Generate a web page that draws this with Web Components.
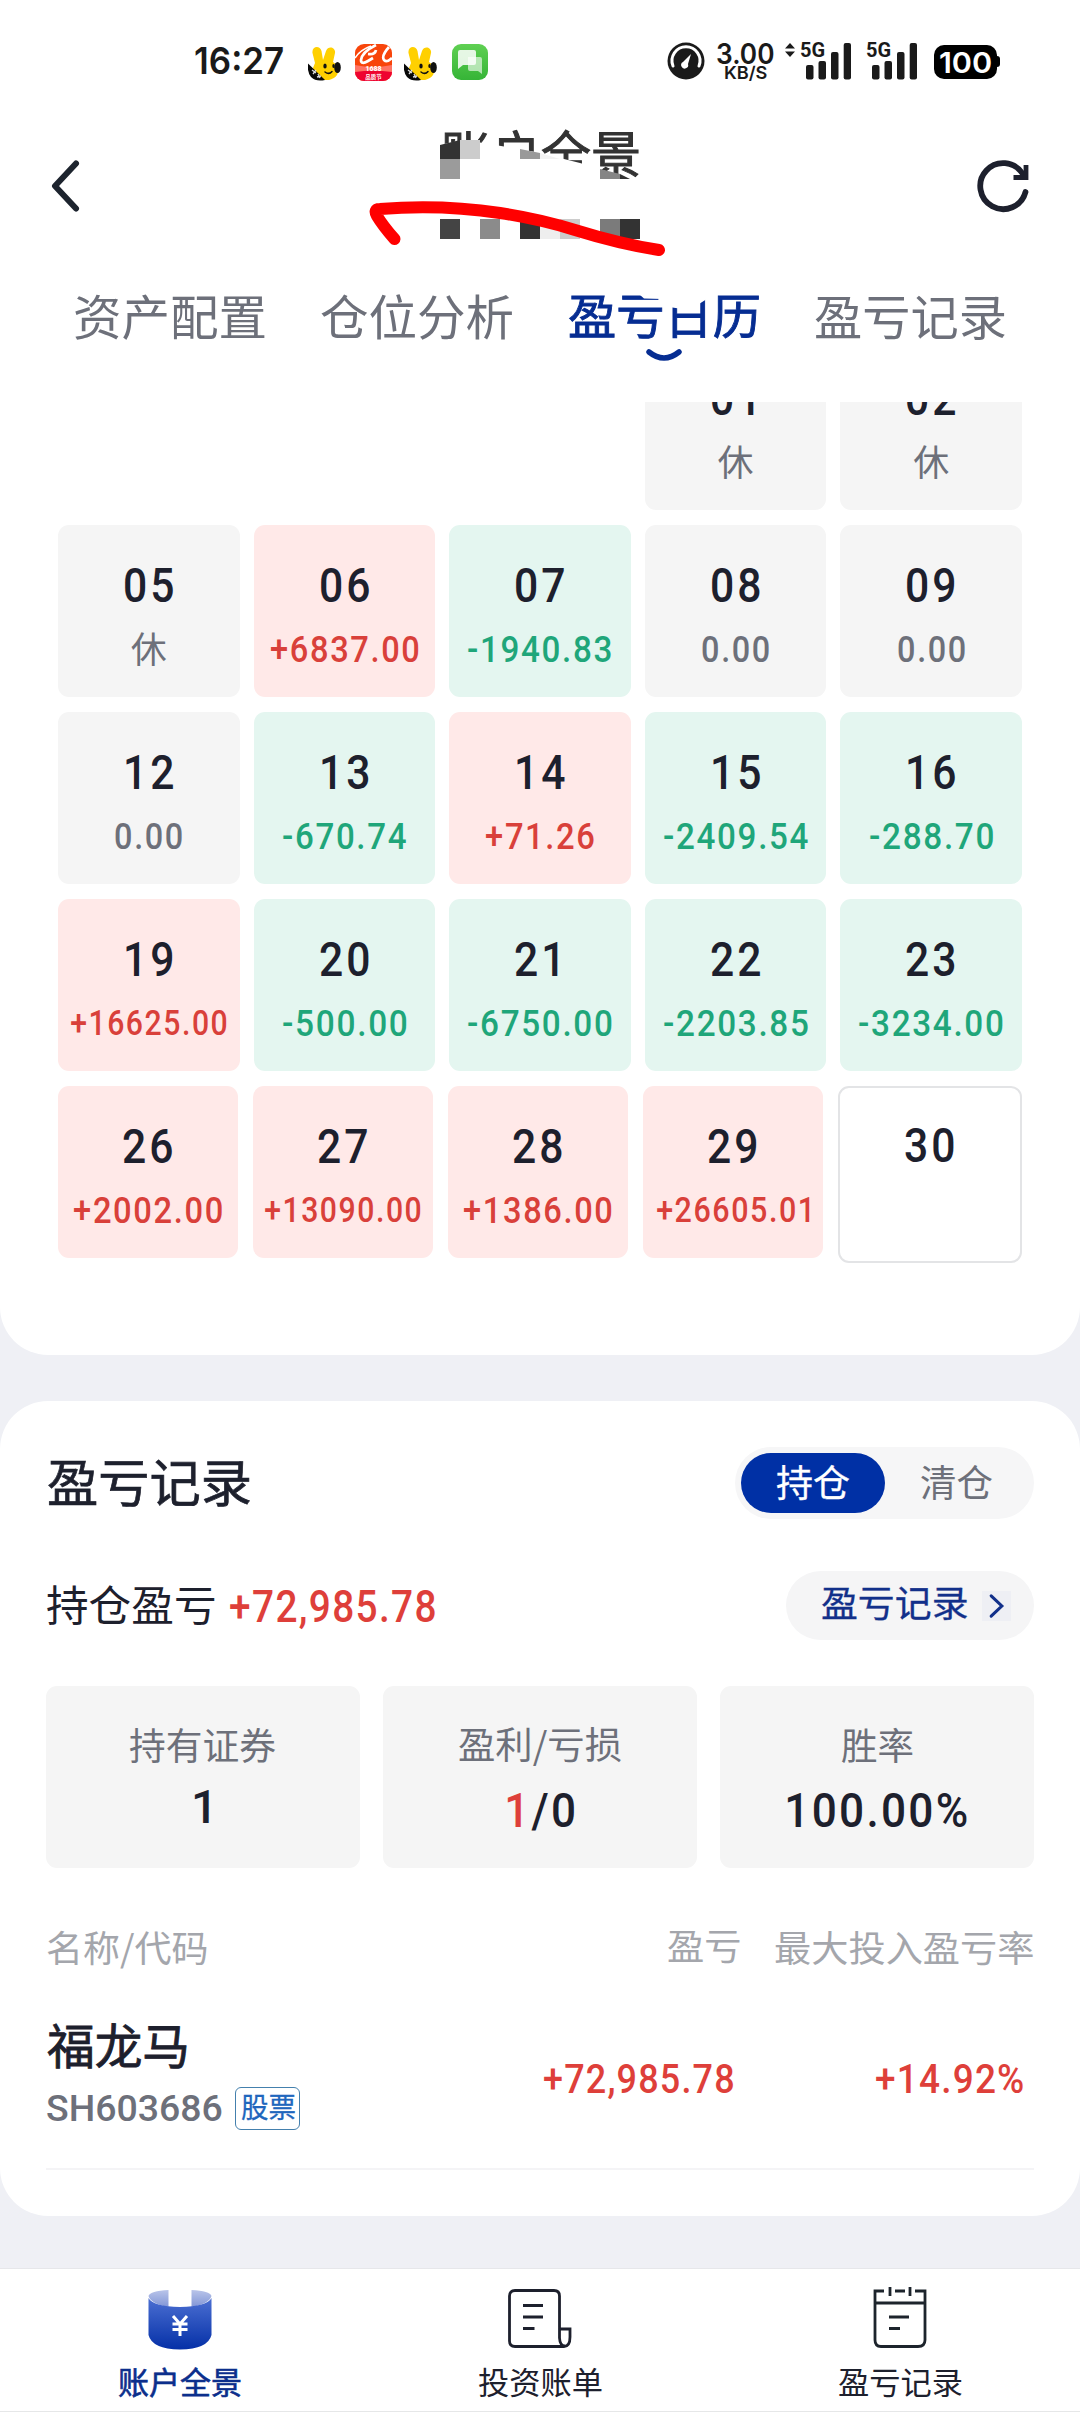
<!DOCTYPE html>
<html lang="zh-CN">
<head>
<meta charset="utf-8">
<title>账户全景</title>
<style>
html,body{margin:0;padding:0;background:#eff0f5}
body{width:1080px;height:2412px;overflow:hidden;font-family:Roboto,"Noto Sans CJK SC",sans-serif;color:#1d202d}
</style>
</head>
<body>
<account-app></account-app>
<script>
const define=(name,html,cls)=>{
  const t=document.createElement('template');t.innerHTML=html;
  customElements.define(name,cls||class extends HTMLElement{
    constructor(){super();this.attachShadow({mode:'open'}).append(t.content.cloneNode(true));}
  });
};
const ctx=document.createElement('canvas').getContext('2d');

/* One line of text fitted to an ink width (w) or a horizontal factor (k), centred on its ink. */
customElements.define('fit-text',class extends HTMLElement{
  connectedCallback(){
    const a=n=>this.getAttribute(n), s=+a('s'), wt=a('wt')||400, ls=+(a('ls')||0), txt=this.textContent;
    const cjk=/[\u4e00-\u9fff]/.test(txt);
    const fam=a('f')?`"${a('f')}",sans-serif`:cjk?'"Noto Sans CJK SC",sans-serif':'Roboto,"Noto Sans CJK SC",sans-serif';
    ctx.font=`${wt} ${s}px ${fam}`;
    const m=ctx.measureText(txt), v=cjk?m:ctx.measureText('0'), extra=ls*(txt.length-1);
    const l=m.actualBoundingBoxLeft, r=m.actualBoundingBoxRight+extra;
    let k,w,dx;
    if(a('w')){w=+a('w');k=w/(l+r);dx=l*k;}else{k=+(a('k')||1);w=(m.width+extra)*k;dx=0;}
    const dy=(v.actualBoundingBoxAscent-v.actualBoundingBoxDescent)/2-(m.fontBoundingBoxAscent-m.fontBoundingBoxDescent)/2;
    this.attachShadow({mode:'open'}).innerHTML=`<style>
      :host{display:block;flex:none;width:${w}px;height:${s}px;white-space:nowrap}
      span{display:inline-block;font:${wt} ${s}px/${s}px ${fam};letter-spacing:${ls}px;transform-origin:0 50%;
      transform:translate(${dx}px,${dy}px) scaleX(${k});-webkit-text-stroke:${a('sk')||0}px currentColor}
      </style><span><slot></slot></span>`;
  }
});

define('signal-bars',`<style>:host{display:flex;align-items:flex-start}svg{display:block}
fit-text{margin:-3px -17px 0 0}</style>
<fit-text s="20" wt="700" w="22"><slot></slot></fit-text>
<svg width="46" height="37" viewBox="0 0 46 37" fill="#1a1a1a"><rect x="1" y="22" width="7.5" height="14.5" rx="2"/><rect x="13.5" y="18" width="7.5" height="18.500" rx="2"/><rect x="26" y="9" width="7.500" height="27.5" rx="2"/><rect x="38.700" y="0" width="7.300" height="36.500" rx="2"/></svg>`);

define('bunny-icon',`<style>:host{display:block}svg{display:block}</style>
<svg width="34" height="36" viewBox="0 0 34 36">
<path d="M7 17 4.500 7C3.500 0 12-1 13.500 5l1.500 9 3-9c2-6 10-4 9 2l-2 9c5 3 7 8 4 13-2 3-5 4-8 5l-6 0C10 32 6 26 5 22z" fill="#ffd000"/>
<ellipse cx="29.500" cy="21.500" rx="3.300" ry="5.500" fill="#111"/><ellipse cx="17" cy="20" rx="1.700" ry="2.500" fill="#111"/><ellipse cx="25.500" cy="20" rx="1.200" ry="2" fill="#111"/>
<path d="M17 26q4 3 7-.5" stroke="#111" stroke-width="1.500" fill="none" stroke-linecap="round"/>
<path d="M0 17.500 17 34Q8 36 3 31-1 26 0 17.500z" fill="#080808"/><path d="m4 24 4 3m-3 1 3-4m1 7 4-1m-3-2 2 4" stroke="#ddd" stroke-width="1.300"/></svg>`);

define('status-bar',`<style>:host{display:flex;height:100px;align-items:flex-start;color:#1a1a1a;box-sizing:border-box;padding-left:195px}
svg{display:block;flex:none}.bat{margin-left:17px;width:63px;height:34px;border-radius:10px;background:#000;color:#fff;display:flex;align-items:center;justify-content:center;margin-top:45px}
.deal{width:37px;height:37px;border-radius:9px;margin:44px 12px 0 13px;overflow:hidden}
.speed{margin:39px 0 0 12px;display:flex;flex-direction:column;align-items:center;width:57px}
.nub{width:3px;height:11px;margin-top:56px;background:#000;border-radius:0 3px 3px 0}</style>
<fit-text s="37" wt="600" w="88" f="Inter" style="margin-top:42px">16:27</fit-text>
<bunny-icon style="margin:46px 0 0 25px"></bunny-icon>
<div class="deal"><svg width="37" height="37" viewBox="0 0 37 37"><rect width="37" height="37" fill="#f8450b"/>
<path d="M0 14Q5 6 16 2" stroke="#fff" stroke-width="1.500" fill="none"/><path d="M21 1Q7 8 6 16q0 5 7 1l5-3M13 10q7 1 8-4M34 3Q26 12 29 16q3 3 8-2" stroke="#fff" stroke-width="2.700" fill="none"/>
<path d="M0 21q18 4 37 0v16H0z" fill="#ff7465"/><path d="M0 28q18-3 37 0v9H0z" fill="#ee0430"/>
<text x="18.500" y="27" text-anchor="middle" font-family="Roboto" font-weight="900" font-size="7" fill="#fff">1688</text><text x="18.500" y="35" text-anchor="middle" font-family="Noto Sans CJK SC" font-weight="700" font-size="5.500" fill="#fff">品质节</text></svg></div>
<bunny-icon style="margin-top:46px"></bunny-icon>
<svg style="margin:44px 0 0 14px" width="37" height="37" viewBox="0 0 37 37"><defs><linearGradient id="g" x2="0" y2="1"><stop stop-color="#5fd052"/><stop offset="1" stop-color="#36b437"/></linearGradient></defs><rect width="36" height="36" rx="9" fill="url(#g)"/><path d="M16 13h12q2 0 2 2v15l-4-3H18q-2 0-2-2z" fill="#fff" opacity=".6"/><path d="M8 6h14q2 0 2 2v11q0 2-2 2H11l-5 4V8q0-2 2-2z" fill="#fff" opacity=".85"/></svg>
<svg style="margin:42px 0 0 178px" width="38" height="38" viewBox="0 0 38 38"><circle cx="19" cy="19" r="18.500" fill="#1a1a1a"/><path d="M6 24A14 14 0 1 1 32 24" fill="none" stroke="#fff" stroke-width="3" stroke-linecap="round"/><path d="M24 12 16 20a3.500 3.500 0 1 0 5 2z" fill="#fff"/></svg>
<div class="speed"><fit-text s="28" wt="600" w="57" f="Inter">3.00</fit-text><fit-text s="17.5" wt="600" w="42" f="Inter" style="margin-top:-3px">KB/S</fit-text></div>
<svg style="margin:43px 5px 0 11px" width="10" height="14" viewBox="0 0 10 14" fill="#1a1a1a"><path d="M5 0 10 5.500H0zM5 14 10 8.500H0z"/></svg>
<signal-bars style="margin-top:43px">5G</signal-bars><signal-bars style="margin:43px 0 0 15px">5G</signal-bars>
<div class="bat"><fit-text s="29" wt="600" w="51" f="Inter">100</fit-text></div><div class="nub"></div>`);

define('app-header',`<style>:host{display:flex;height:172px;align-items:center;justify-content:space-between;position:relative;box-sizing:border-box;padding:0 50px 0 50px;color:#333}
svg{display:block}.ink{position:absolute;left:360px;top:25px}fit-text{margin:0 0 61px 1px}</style>
<svg width="54" height="54" viewBox="0 0 54 54" fill="none" stroke="#1d242e" stroke-width="6" stroke-linecap="round" stroke-linejoin="round"><path d="M26 4.500 5 27l21 22.500"/></svg>
<fit-text s="50" w="199" sk="1"><slot></slot></fit-text>
<svg width="54" height="54" viewBox="0 0 54 54" fill="none" stroke="#1d202d" stroke-width="5.800"><path d="M49.500 33A23 23 0 1 1 46.500 14.500" stroke-linecap="round"/><path d="M50 6v12.500H37.500" stroke-width="4.800"/></svg>
<svg class="ink" width="320" height="140" viewBox="360 125 320 140"><path d="M435 146 463 140 483 143 520 149 540 153 580 163 600 169 632 180V186H435z" fill="#fff"/>
<path d="M440 145 460 140V159H440z" fill="#333"/><path d="M460 140h20v19h-20z" fill="#ccc"/><path d="M440 159h20v20h-20z" fill="#9b9b9b"/><path d="M520 149 540 153V159H520z" fill="#999"/><path d="M540 153 560 159H540z" fill="#f2f2f2"/><path d="M600 169 620 174V179H600z" fill="#858585"/><path d="M620 174 630 179H620z" fill="#333"/>
<path d="M440 219h20v20h-20z" fill="#444"/><path d="M480 219h20v20h-20z" fill="#8b8b8b"/><path d="M520 219h20v20h-20zM620 219h20v20h-20z" fill="#333"/><path d="M540 219h20v20h-20z" fill="#eee"/><path d="M560 219h20v20h-20z" fill="#ccc"/><path d="M600 219h20v20h-20z" fill="#7b7b7b"/>
<path d="M394.500 239Q383 226 377 216 373 209 380 209 440 204 500 213 540 219 575 230 620 244 659 250" fill="none" stroke="#f00" stroke-width="12" stroke-linecap="round" stroke-linejoin="round"/></svg>`);

define('tab-strip',`<style>:host{display:flex;height:130px;box-sizing:border-box;padding:20.5px 75px 0;justify-content:space-between;color:#6d707a}
.on{color:#062d92;position:relative;display:flex;flex-direction:column;align-items:center}.smile{display:block;margin-top:8px}.cut{position:absolute;left:0;top:-6px}</style>
<fit-text s="48" w="190">资产配置</fit-text><fit-text s="48" w="191">仓位分析</fit-text>
<div class="on"><fit-text s="48" w="190" sk=".9">盈亏日历</fit-text><svg class="smile" width="38" height="14" viewBox="0 0 38 14"><path d="M4 3Q19 15 34 3" fill="none" stroke="#062d92" stroke-width="5.500" stroke-linecap="round"/></svg>
<svg class="cut" width="190" height="40" viewBox="568 287 190 40" fill="#fff"><path d="M668 287H709V297L698 304V311.500L668 307z"/><path d="M630 287H662V299L643 298.500z"/></svg></div>
<fit-text s="48" w="190">盈亏记录</fit-text>`);

class DayCell extends HTMLElement{
  connectedCallback(){
    const g=n=>this.getAttribute(n)||'', v=g('v'), c=v[0]==='+'?['#ffe9e8','#d9403a']:v[0]==='-'?['#e4f6f0','#1fa67a']:['#f5f5f5','#6d707a'];
    const blank=!g('d'), open=!v&&!blank;
    this.attachShadow({mode:'open'}).innerHTML=`<style>:host{display:flex;flex-direction:column;align-items:center;gap:28.5px;height:172px;box-sizing:border-box;padding-top:41.500px;border-radius:11px;background:${blank||open?'transparent':c[0]}}
    ${open?':host{height:177px;border:2px solid #e3e4e6;padding-top:38.500px}':''}
    .v{color:${c[1]}}</style>${blank?'':`<fit-text s="49" wt="500" k=".87" ls="3.5" style="height:36px;display:flex;align-items:center">${g('d')}</fit-text>`}
    ${v?`<fit-text class="v" s="${g('s')||36}" wt="${v==='休'?400:500}" ${v==='休'?'k="1"':`ls="1.8" w="${g('w')}"`}>${v}</fit-text>`:''}`;
  }
}
customElements.define('day-cell',DayCell);

define('profit-calendar',`<style>:host{display:block;height:953px;background:#fff;border-radius:0 0 48px 48px;overflow:hidden;padding:0 58px;box-sizing:border-box}
.rows{display:flex;flex-direction:column;gap:15px;margin-top:-64px}
.r{display:grid;grid-template-columns:repeat(5,1fr);gap:14px}.last{grid-template-columns:180px 180px 180px 180px 184px;gap:15px}</style>
<div class="rows">
<div class="r"><day-cell></day-cell><day-cell></day-cell><day-cell></day-cell><day-cell d="01" v="休"></day-cell><day-cell d="02" v="休"></day-cell></div>
<div class="r"><day-cell d="05" v="休"></day-cell><day-cell d="06" v="+6837.00" w="147.500"></day-cell><day-cell d="07" v="-1940.83" w="143"></day-cell><day-cell d="08" v="0.00" w="67"></day-cell><day-cell d="09" v="0.00" w="67"></day-cell></div>
<div class="r"><day-cell d="12" v="0.00" w="67"></day-cell><day-cell d="13" v="-670.74" w="123"></day-cell><day-cell d="14" v="+71.26" w="107.500"></day-cell><day-cell d="15" v="-2409.54" w="144"></day-cell><day-cell d="16" v="-288.70" w="123"></day-cell></div>
<div class="r"><day-cell d="19" v="+16625.00" w="156" s="35"></day-cell><day-cell d="20" v="-500.00" w="123.500"></day-cell><day-cell d="21" v="-6750.00" w="143.500"></day-cell><day-cell d="22" v="-2203.85" w="143.500"></day-cell><day-cell d="23" v="-3234.00" w="143.500"></day-cell></div>
<div class="r last"><day-cell d="26" v="+2002.00" w="148"></day-cell><day-cell d="27" v="+13090.00" w="156" s="35"></day-cell><day-cell d="28" v="+1386.00" w="147.500"></day-cell><day-cell d="29" v="+26605.01" w="153" s="35"></day-cell><day-cell d="30"></day-cell></div>
</div>`);

define('stat-card',`<style>:host{display:flex;flex:1;flex-direction:column;align-items:center;height:182px;border-radius:11px;background:#f5f5f5;box-sizing:border-box;padding-top:41px;gap:20px;color:#1d202d}</style><slot name="label"></slot><slot></slot>`);

define('profit-records',`<style>:host{display:block;margin-top:46px;height:815px;background:#fff;border-radius:48px;box-sizing:border-box;padding:46px 46px 0}
.row{display:flex;align-items:center;justify-content:space-between}
.seg{display:flex;width:299px;height:72px;border-radius:36px;background:#f6f6f7;box-sizing:border-box;padding:6px;color:#6d707a}
.seg div{width:144px;height:60px;border-radius:30px;display:flex;align-items:center;justify-content:center;padding-bottom:2px;box-sizing:border-box}.seg .on{background:#0030a5;color:#fff}
.two{margin-top:52px}.two>div{display:flex;align-items:center;gap:15px}.red{color:#de3f3a}
.two .go{background:#f5f5f6;width:248px;height:69px;border-radius:35px;box-sizing:border-box;padding:0 23px 3px 36px;justify-content:space-between;color:#12308a}
.go svg{background:#eeeff4;margin-top:3px}
.stats{display:flex;gap:23px;margin-top:46px}.g{color:#6d707a}
.head{margin-top:62px;color:#a4a6ac}.head div{display:flex;gap:35px;margin-right:1px}
.item{height:203px;border-bottom:2px solid #f4f4f6;box-sizing:border-box;display:flex;align-items:flex-start}
.name{width:498px;padding-top:55px}.code{display:flex;align-items:center;gap:13px;margin-top:17px;color:#6d707a}
.tag{width:65px;height:43px;border:1.500px solid #4480ad;border-radius:6px;box-sizing:border-box;display:flex;align-items:center;justify-content:center;color:#2066bd}
.n{margin-top:92px}</style>
<div class="row"><fit-text s="51" w="202" sk=".7" style="margin-left:2px">盈亏记录</fit-text>
<div class="seg"><div class="on"><fit-text s="37" w="72" sk=".3">持仓</fit-text></div><div><fit-text s="37" w="71">清仓</fit-text></div></div></div>
<div class="row two"><div><fit-text s="42.5" w="168" style="margin-left:1px">持仓盈亏</fit-text><fit-text class="red" s="43.5" wt="500" ls="1.5" w="205">+72,985.78</fit-text></div>
<div class="go"><fit-text s="36.5" w="145" sk=".3">盈亏记录</fit-text><svg width="30" height="30" viewBox="0 0 30 30"><path d="M9.500 4.500 20.500 15 9.500 25.500" fill="none" stroke="#12308a" stroke-width="3.200" stroke-linecap="round"/></svg></div></div>
<div class="stats"><stat-card><fit-text class="g" slot="label" s="37" w="146">持有证券</fit-text><fit-text s="47" wt="500" w="15" style="margin:-1px 3px 0 0">1</fit-text></stat-card>
<stat-card><fit-text class="g" slot="label" s="37" w="162" style="margin:1px 0 -1px">盈利/亏损</fit-text><fit-text s="48" wt="500" ls="2.5" w="67" style="margin-top:1.5px"><span class="red">1</span>/0</fit-text></stat-card>
<stat-card><fit-text class="g" slot="label" s="37" w="71">胜率</fit-text><fit-text s="48" wt="500" ls="2.5" w="180" style="margin-top:1.5px">100.00%</fit-text></stat-card></div>
<div class="row head"><fit-text s="36.5" w="160" style="margin:2px 0 -2px 1px">名称/代码</fit-text><div><fit-text s="36.5" w="72">盈亏</fit-text><fit-text s="36.5" w="258">最大投入盈亏率</fit-text></div></div>
<div class="item"><div class="name"><fit-text s="48" w="140" sk=".8" style="margin-left:1px">福龙马</fit-text><div class="code"><fit-text s="36.5" wt="500" w="175" style="margin-left:1px">SH603686</fit-text><div class="tag"><fit-text s="28" w="54" sk=".3">股票</fit-text></div></div></div>
<fit-text class="red n" s="40" wt="500" ls="1.3" w="189">+72,985.78</fit-text><fit-text class="red n" s="40" wt="500" ls="1.3" w="147" style="margin-left:143px">+14.92%</fit-text></div>`);

define('nav-item',`<style>:host{display:flex;flex:1;flex-direction:column;align-items:center;gap:16.500px;padding-top:17px}</style><slot></slot>`);
define('bottom-nav',`<style>:host{display:flex;margin-top:52px;height:144px;background:#fff;border-top:1px solid #e6e7ea;border-bottom:1px solid #e6e7e8;box-sizing:border-box;color:#1d202d}svg{display:block}</style>
<nav-item><svg width="64" height="64" viewBox="0 0 64 64"><defs><linearGradient id="a" x2="0" y2="1"><stop stop-color="#4b6fd2"/><stop offset="1" stop-color="#0530a7"/></linearGradient><linearGradient id="b" x2="0" y2="1"><stop stop-color="#b9c4e9"/><stop offset="1" stop-color="#8196d7"/></linearGradient></defs>
<path d="M.5 10Q2 5 20.500 4V21Q3 18 .5 10zM63.500 10Q62 5 43.500 4V21Q61 18 63.500 10z" fill="url(#b)"/><path d="M.5 12Q5 20.500 32 21 59 20.500 63.500 12V49Q60 63 32 63.500 4 63 .5 49z" fill="url(#a)"/><path d="m25 30 7 8 7-8M24.500 38h15M24.500 43.500h15M32 38v12" stroke="#fff" stroke-width="3" fill="none"/></svg><fit-text s="31" w="122" sk=".6" style="color:#0c2f8c">账户全景</fit-text></nav-item>
<nav-item><svg width="64" height="64" viewBox="0 0 64 64" fill="none" stroke="#1d202d" stroke-width="2.800"><path d="M51.500 43V10Q51.500 4.500 46 4.500H7Q1.500 4.500 1.500 10V55Q1.500 60.500 7 60.500H56Q62 60.500 62 51V43H51.500V52Q52 60 57 60"/><path d="M15 19.500H35M15 31H35M15 42.500H26.500"/></svg><fit-text s="31" w="123">投资账单</fit-text></nav-item>
<nav-item><svg width="64" height="64" viewBox="0 0 64 64" fill="none" stroke="#1d242c" stroke-width="2.800"><path d="M16 5H7V54Q7 60.500 13 60.500H50Q57 60.500 57 54V5H47M27 5H37M22 1V10M42 1V10M7 17H57M21 31H41M21 42.500H32"/></svg><fit-text s="31" w="123">盈亏记录</fit-text></nav-item>`);

define('account-app',`<style>:host{display:block;width:1080px;height:2412px;background:#eff0f5}header{background:#fff}</style>
<header><status-bar></status-bar><app-header>账户全景</app-header><tab-strip></tab-strip></header><main><profit-calendar></profit-calendar><profit-records></profit-records></main><bottom-nav></bottom-nav>`);
</script>
</body>
</html>
